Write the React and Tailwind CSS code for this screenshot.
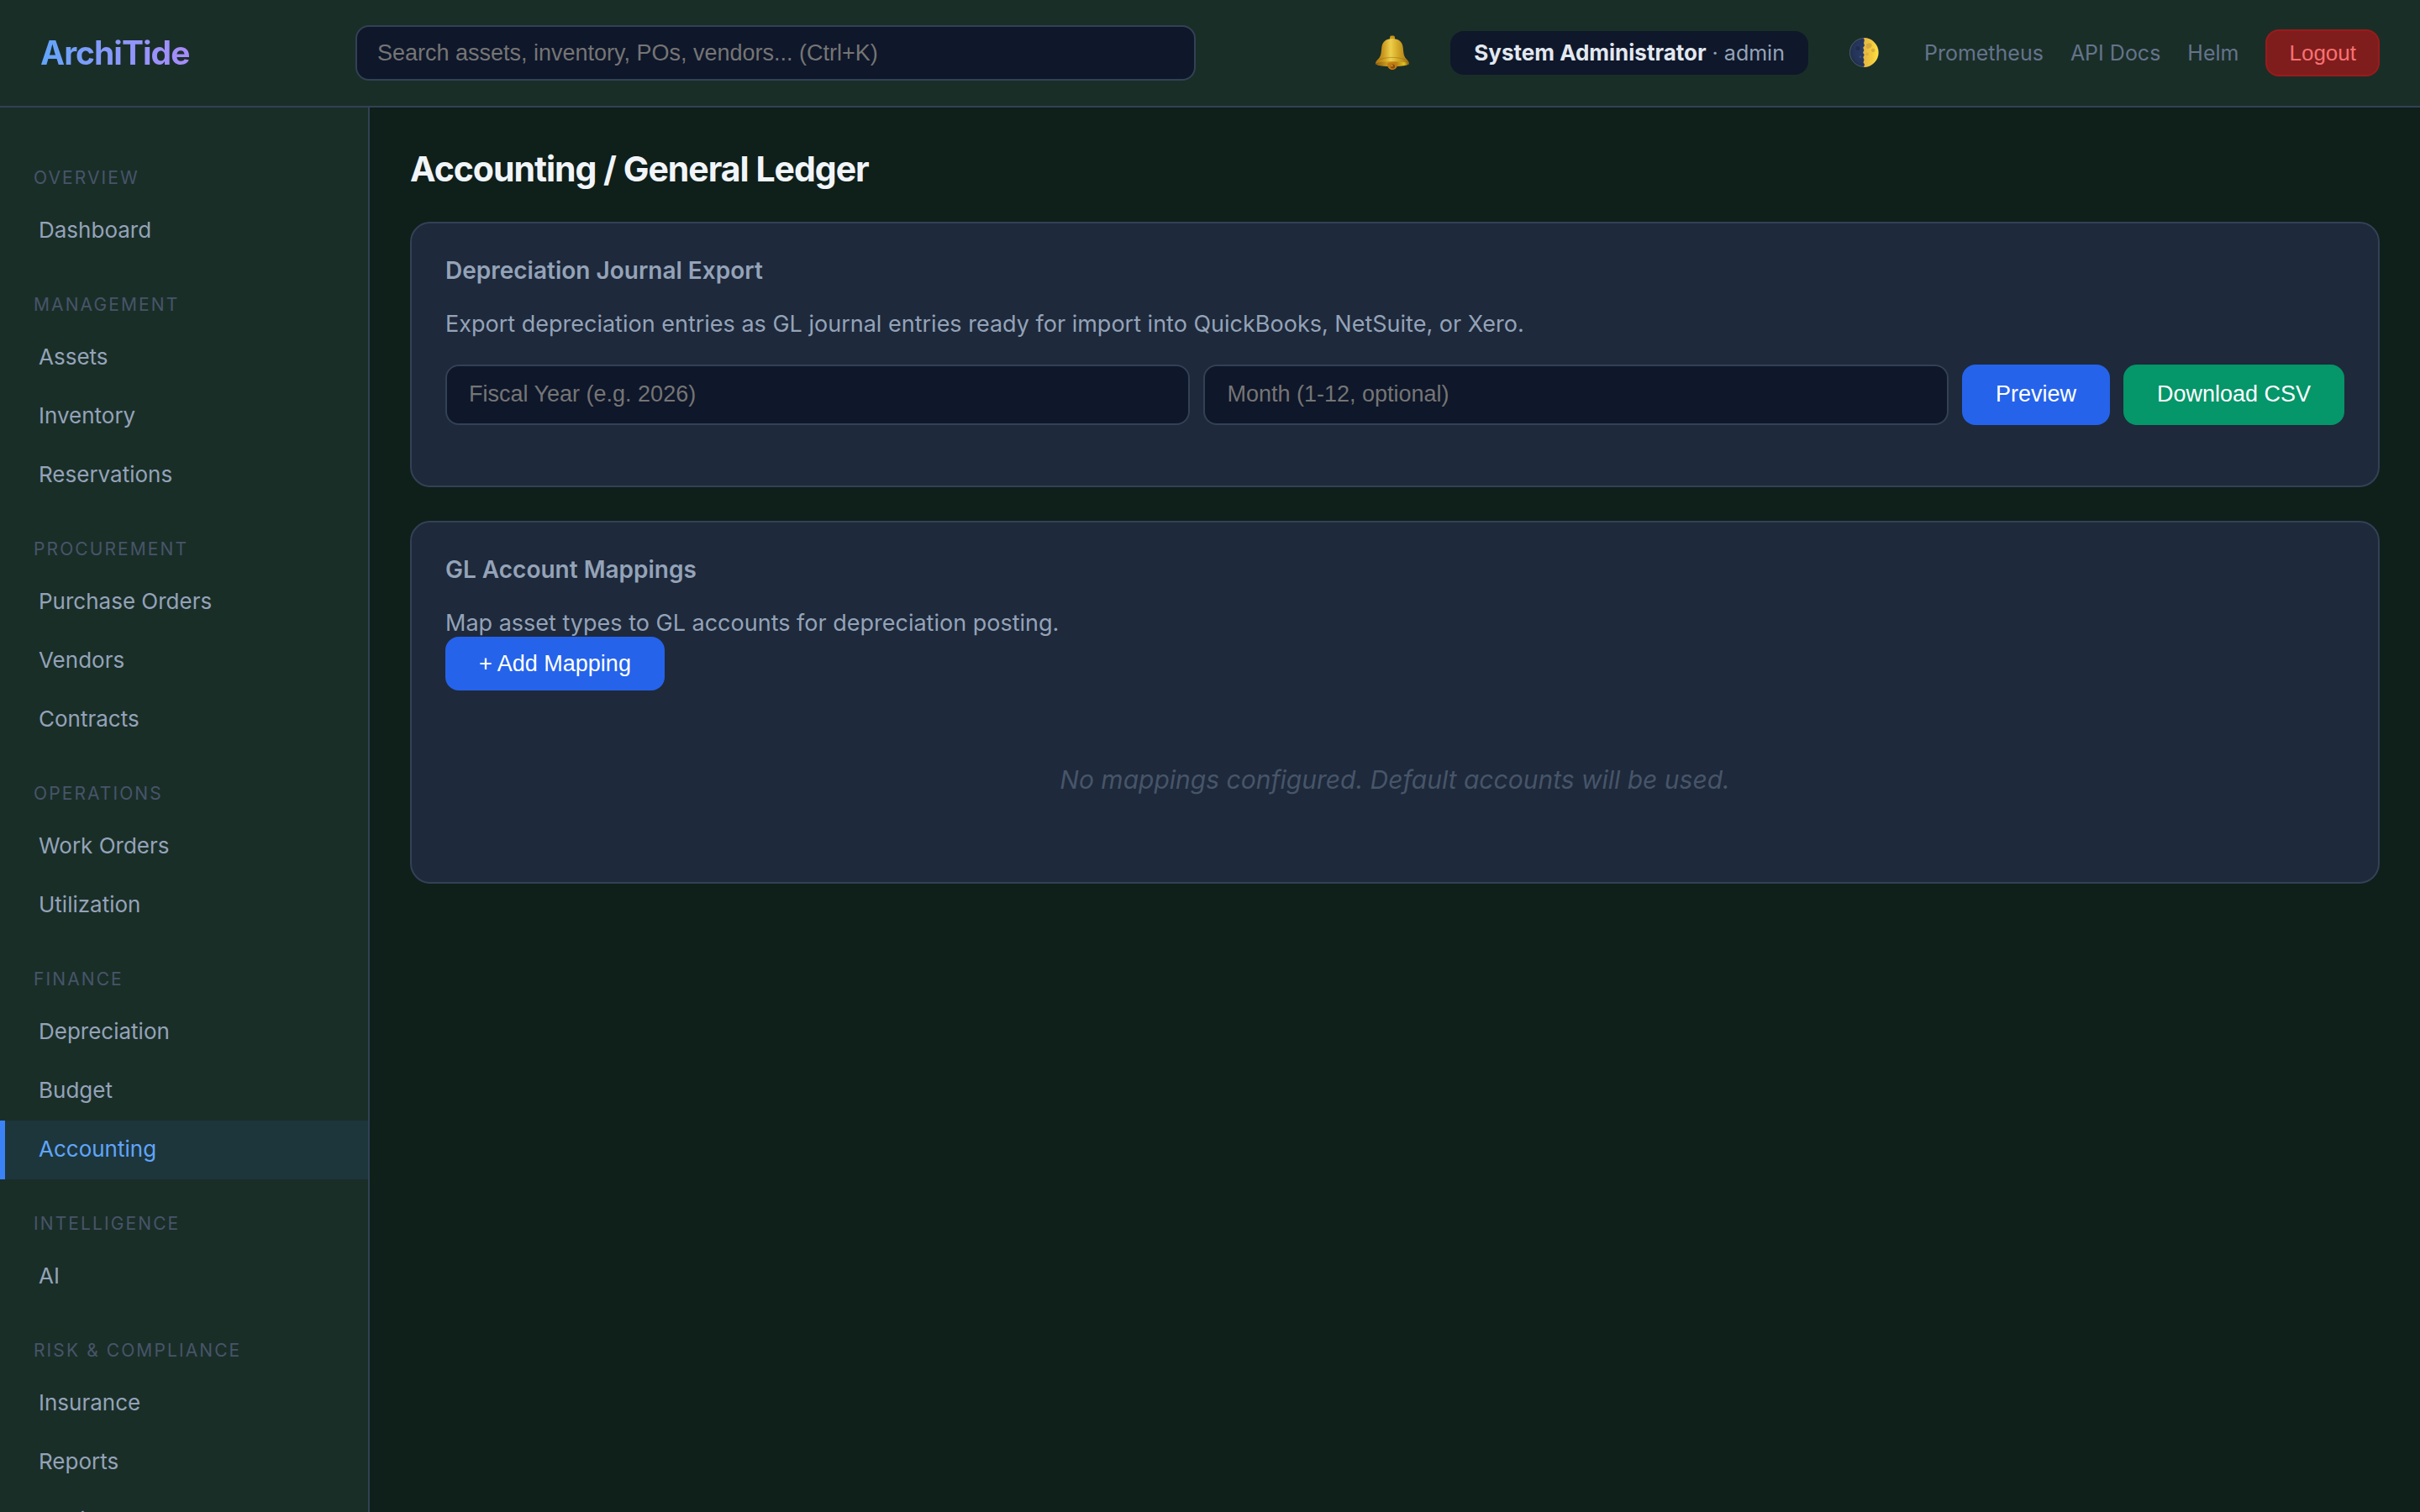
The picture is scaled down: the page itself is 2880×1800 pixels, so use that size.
const navGroups = [
    { title: "Overview", items: ["Dashboard"] },
    { title: "Management", items: ["Assets", "Inventory", "Reservations"] },
    { title: "Procurement", items: ["Purchase Orders", "Vendors", "Contracts"] },
    { title: "Operations", items: ["Work Orders", "Utilization"] },
    { title: "Finance", items: ["Depreciation", "Budget", "Accounting"] },
    { title: "Intelligence", items: ["AI"] },
    { title: "Risk & Compliance", items: ["Insurance", "Reports", "Audit"] }
];

const activeItem = "Accounting";

const BellIcon = () => (
    <svg viewBox="0 0 42 42" className="w-[42px] h-[42px]" aria-hidden="true">
        <defs>
            <linearGradient id="bell-body" x1="0" y1="0" x2="1" y2="0">
                <stop offset="0" stopColor="#a8740f" />
                <stop offset="0.22" stopColor="#c9971c" />
                <stop offset="0.45" stopColor="#eccf4c" />
                <stop offset="0.62" stopColor="#d9b02c" />
                <stop offset="0.85" stopColor="#b98a1a" />
                <stop offset="1" stopColor="#8f6410" />
            </linearGradient>
            <linearGradient id="bell-rim" x1="0" y1="0" x2="1" y2="0">
                <stop offset="0" stopColor="#8a5a0c" />
                <stop offset="0.35" stopColor="#cf9a1e" />
                <stop offset="0.6" stopColor="#b57d14" />
                <stop offset="0.85" stopColor="#dcc21f" />
                <stop offset="1" stopColor="#7d520b" />
            </linearGradient>
        </defs>
        <rect x="18" y="0.5" width="6" height="5" rx="2" fill="#c9971c" />
        <path d="M21 4c-7.600 0-12 4-12.700 10.500-.5 5-.6 8.500-2.300 11.500C4.600 28.500 1 30.500 1 33.500 1 36 10 37 21 37s20-1 20-3.500c0-3-3.600-5-5-7.500-1.700-3-1.800-6.500-2.300-11.500C33 8 28.600 4 21 4z" fill="url(#bell-body)" />
        <ellipse cx="21" cy="34" rx="20" ry="2.800" fill="url(#bell-rim)" />
        <path d="M6 29c8-3.500 22-3.500 30 0" fill="none" stroke="#8f6410" strokeOpacity="0.45" strokeWidth="1" />
        <path d="M15 34.500c0-3 12-3 12 0 0 4-2.600 6.500-6 6.500s-6-2.500-6-6.500z" fill="#c27c14" />
        <circle cx="21.500" cy="37" r="2.600" fill="#8a4f0b" />
        <circle cx="20.500" cy="36.200" r="1" fill="#e3a93c" />
    </svg>
);

const MoonIcon = () => (
    <svg viewBox="0 0 42 42" className="w-[42px] h-[42px]" aria-hidden="true">
        <defs>
            <linearGradient id="moon-lit" x1="0" y1="0" x2="1" y2="0">
                <stop offset="0" stopColor="#e3b545" />
                <stop offset="0.6" stopColor="#f3cb3c" />
                <stop offset="1" stopColor="#ffe340" />
            </linearGradient>
            <radialGradient id="moon-dark" cx="0.6" cy="0.45" r="0.7">
                <stop offset="0" stopColor="#2c3f6b" />
                <stop offset="0.7" stopColor="#243457" />
                <stop offset="1" stopColor="#1b2743" />
            </radialGradient>
        </defs>
        <circle cx="18.500" cy="20.500" r="17" fill="url(#moon-dark)" stroke="#4d5b66" strokeWidth="1" />
        <path d="M18 3A17.300 17.300 0 0 1 18 38l1-3.200-1.500-2.500 1-3-1.200-3 1.400-3-1.600-2.500 1.300-3-1.200-3 1.800-2.500-1-3 .8-3z" fill="url(#moon-lit)" />
        <path d="M22 10c2-1.500 5-.8 5.600 1 .6 2.200-1 4-3 4.200-1.800 1.500-3.600.4-3.800-1.600-.1-1.400.2-2.600 1.200-3.600zM28 16c1.800-1 3.600.2 3.400 2-.3 2-2.600 2.600-3.800 1.400-.9-1-.7-2.700.4-3.400z" fill="#c99f3d" fillOpacity="0.7" />
        <path d="M21 21c1.500-.6 3 .4 2.800 1.800-.3 1.400-2.200 1.700-3 .6-.6-.9-.5-1.900.2-2.400z" fill="#c99f3d" fillOpacity="0.5" />
        <circle cx="11" cy="15.500" r="2.500" fill="#1e2c4c" />
        <circle cx="14" cy="25.500" r="1.500" fill="#35497a" />
    </svg>
);

const Header = () => (
    <header className="h-32 shrink-0 flex items-center justify-between px-12 bg-[#1a2e28] border-b-2 border-[#334155]">
        <a href="#" className="text-[39px] leading-[48px] font-bold tracking-tight bg-gradient-to-r from-[#60a5fa] to-[#a78bfa] bg-clip-text text-transparent">
            ArchiTide
        </a>

        <input
            type="search"
            aria-label="Search"
            placeholder="Search assets, inventory, POs, vendors... (Ctrl+K)"
            className="w-[1000px] h-[66px] px-6 rounded-2xl bg-[#0f172a] border-2 border-[#334155] text-[27px] text-[#e2e8f0] placeholder:text-[#757575] font-['Liberation_Sans',Arial,sans-serif] outline-none"
        />

        <div className="flex items-center gap-8 text-[25px] leading-8 text-[#64748b]">
            <button type="button" aria-label="Notifications" className="px-4">
                <BellIcon />
            </button>
            <div className="px-7 py-[10px] rounded-2xl bg-[#0f172a] text-[#94a3b8] whitespace-nowrap">
                <strong className="text-[26px] font-bold text-[#e2e8f0]">System Administrator</strong> · admin
            </div>
            <button type="button" aria-label="Toggle theme" className="px-4">
                <MoonIcon />
            </button>
            <a href="#">Prometheus</a>
            <a href="#">API Docs</a>
            <a href="#">Helm</a>
            <button type="button" className="h-14 px-[26px] rounded-2xl bg-[#7f1d1d] border-2 border-[#991b1b] text-[26px] text-[#f87171] font-['Liberation_Sans',Arial,sans-serif]">
                Logout
            </button>
        </div>
    </header>
);

const Sidebar = () => (
    <nav className="w-[440px] shrink-0 overflow-hidden pt-[31px] bg-[#1a2e28] border-r-2 border-[#334155]">
        {navGroups.map((group) => (
            <div key={group.title}>
                <h2 className="pt-10 pb-[15px] pl-10 text-[21px] leading-[26px] uppercase tracking-widest text-[#475569]">
                    {group.title}
                </h2>
                {group.items.map((item) => (
                    <a
                        key={item}
                        href="#"
                        className={`flex items-center h-[70px] pb-1 pl-10 border-l-[6px] text-[26px] ${item === activeItem ? "border-[#3b82f6] bg-[#3b82f6]/10 text-[#60a5fa]" : "border-transparent text-[#94a3b8]"}`}
                    >
                        {item}
                    </a>
                ))}
            </div>
        ))}
    </nav>
);

const Card = ({ title, description, children }) => (
    <section className="p-10 rounded-3xl bg-[#1e293b] border-2 border-[#334155]">
        <h2 className="mb-8 text-[28px] leading-8 font-semibold text-[#94a3b8]">{title}</h2>
        <p className="text-[27px] leading-8 text-[#94a3b8]">{description}</p>
        {children}
    </section>
);

const inputClass = "flex-1 min-w-0 h-[72px] px-[26px] pb-0.5 rounded-2xl bg-[#0f172a] border-2 border-[#334155] text-[27px] text-[#e2e8f0] placeholder:text-[#757575] font-['Liberation_Sans',Arial,sans-serif] outline-none";
const buttonClass = "px-10 rounded-2xl text-[27px] text-white font-['Liberation_Sans',Arial,sans-serif]";

const App = () => {
    return (
        <div className="h-screen flex flex-col overflow-hidden bg-[#0f1f1a] font-[Inter,sans-serif]">
            <Header />
            <div className="flex flex-1 min-h-0">
                <Sidebar />
                <main className="flex-1 min-w-0 p-12">
                    <h1 className="mb-[38px] text-[41px] leading-[50px] font-bold tracking-tight text-[#f1f5f9]">
                        Accounting / General Ledger
                    </h1>

                    <div className="flex flex-col gap-10">
                        <Card
                            title="Depreciation Journal Export"
                            description="Export depreciation entries as GL journal entries ready for import into QuickBooks, NetSuite, or Xero."
                        >
                            <form className="flex gap-4 mt-8 mb-8">
                                <input type="text" aria-label="Fiscal Year" placeholder="Fiscal Year (e.g. 2026)" className={inputClass} />
                                <input type="text" aria-label="Month" placeholder="Month (1-12, optional)" className={inputClass} />
                                <button type="button" className={`${buttonClass} pb-0.5 bg-[#2563eb]`}>Preview</button>
                                <button type="button" className={`${buttonClass} pb-0.5 bg-[#059669]`}>Download CSV</button>
                            </form>
                        </Card>

                        <Card
                            title="GL Account Mappings"
                            description="Map asset types to GL accounts for depreciation posting."
                        >
                            <button type="button" className={`${buttonClass} h-16 bg-[#2563eb]`}>+ Add Mapping</button>
                            <p className="mt-7 pt-[54px] pb-[58px] text-center text-[30px] leading-[48px] italic text-[#475569]">
                                No mappings configured. Default accounts will be used.
                            </p>
                        </Card>
                    </div>
                </main>
            </div>
        </div>
    );
};

export default App;
